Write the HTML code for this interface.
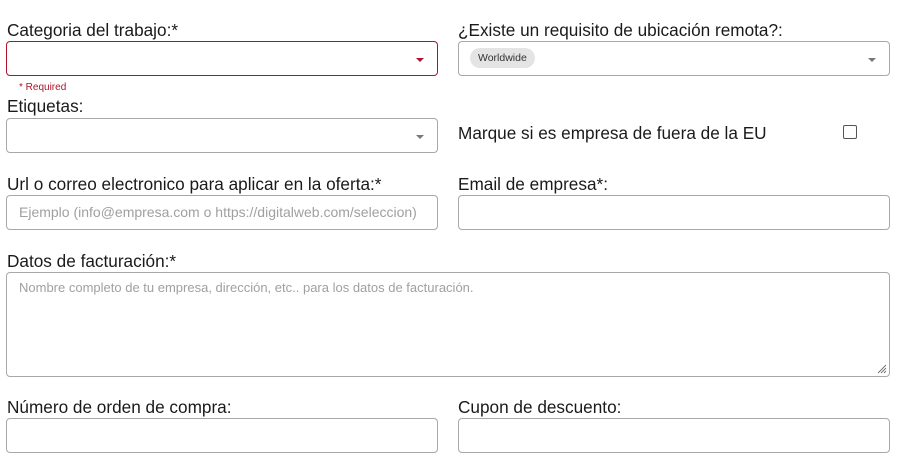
<!DOCTYPE html>
<html><head><style>
body{margin:0;width:906px;height:467px;background:#fff;font-family:"Liberation Sans",sans-serif;color:#1a1a1a;position:relative;overflow:hidden}
.l{position:absolute;font-size:17.2px;line-height:18px}
.b{position:absolute;border:1px solid #a8a8a8;border-radius:4px;box-sizing:border-box;background:#fff}
.ph{position:absolute;left:12px;font-size:14px;color:#a0a0a0}
.arr{position:absolute;right:13px;top:16px;width:0;height:0;border-left:4px solid transparent;border-right:4px solid transparent;border-top:4px solid #777}
</style></head><body>
<div class="l" style="left:7px;top:21px">Categoria del trabajo:*</div>
<div class="b" style="left:6px;top:41px;width:432px;height:35px;border-color:#b0132c"><div class="arr" style="border-top-color:#b0132c"></div></div>
<div style="position:absolute;left:19px;top:82px;font-size:10px;color:#b0132c">* Required</div>
<div class="l" style="left:7px;top:97px">Etiquetas:</div>
<div class="b" style="left:6px;top:118px;width:432px;height:35px"><div class="arr"></div></div>

<div class="l" style="left:458px;top:21px">¿Existe un requisito de ubicación remota?:</div>
<div class="b" style="left:458px;top:41px;width:432px;height:35px"><div class="arr"></div>
<div style="position:absolute;left:11px;top:6px;height:20px;padding:0 8px;border-radius:10px;background:#e4e4e4;font-size:10.5px;line-height:20px;color:#333">Worldwide</div></div>
<div class="l" style="left:458px;top:124px">Marque si es empresa de fuera de la EU</div>
<div style="position:absolute;left:843px;top:125px;width:14px;height:14px;border:1.5px solid #555;border-radius:2px;box-sizing:border-box"></div>

<div class="l" style="left:7px;top:175px">Url o correo electronico para aplicar en la oferta:*</div>
<div class="b" style="left:6px;top:195px;width:432px;height:35px"><div class="ph" style="top:8px">Ejemplo (info@empresa.com o https://digitalweb.com/seleccion)</div></div>
<div class="l" style="left:458px;top:175px">Email de empresa*:</div>
<div class="b" style="left:458px;top:195px;width:432px;height:35px"></div>

<div class="l" style="left:7px;top:252px">Datos de facturación:*</div>
<div class="b" style="left:6px;top:272px;width:884px;height:105px"><div class="ph" style="top:7px;font-size:13px">Nombre completo de tu empresa, dirección, etc.. para los datos de facturación.</div>
<svg style="position:absolute;right:2px;bottom:2px" width="10" height="10"><path d="M9 1L1 9M9 4L4 9M9 7L7 9" stroke="#777" stroke-width="1"/></svg></div>

<div class="l" style="left:7px;top:398px">Número de orden de compra:</div>
<div class="b" style="left:6px;top:418px;width:432px;height:35px"></div>
<div class="l" style="left:458px;top:398px">Cupon de descuento:</div>
<div class="b" style="left:458px;top:418px;width:432px;height:35px"></div>
</body></html>
